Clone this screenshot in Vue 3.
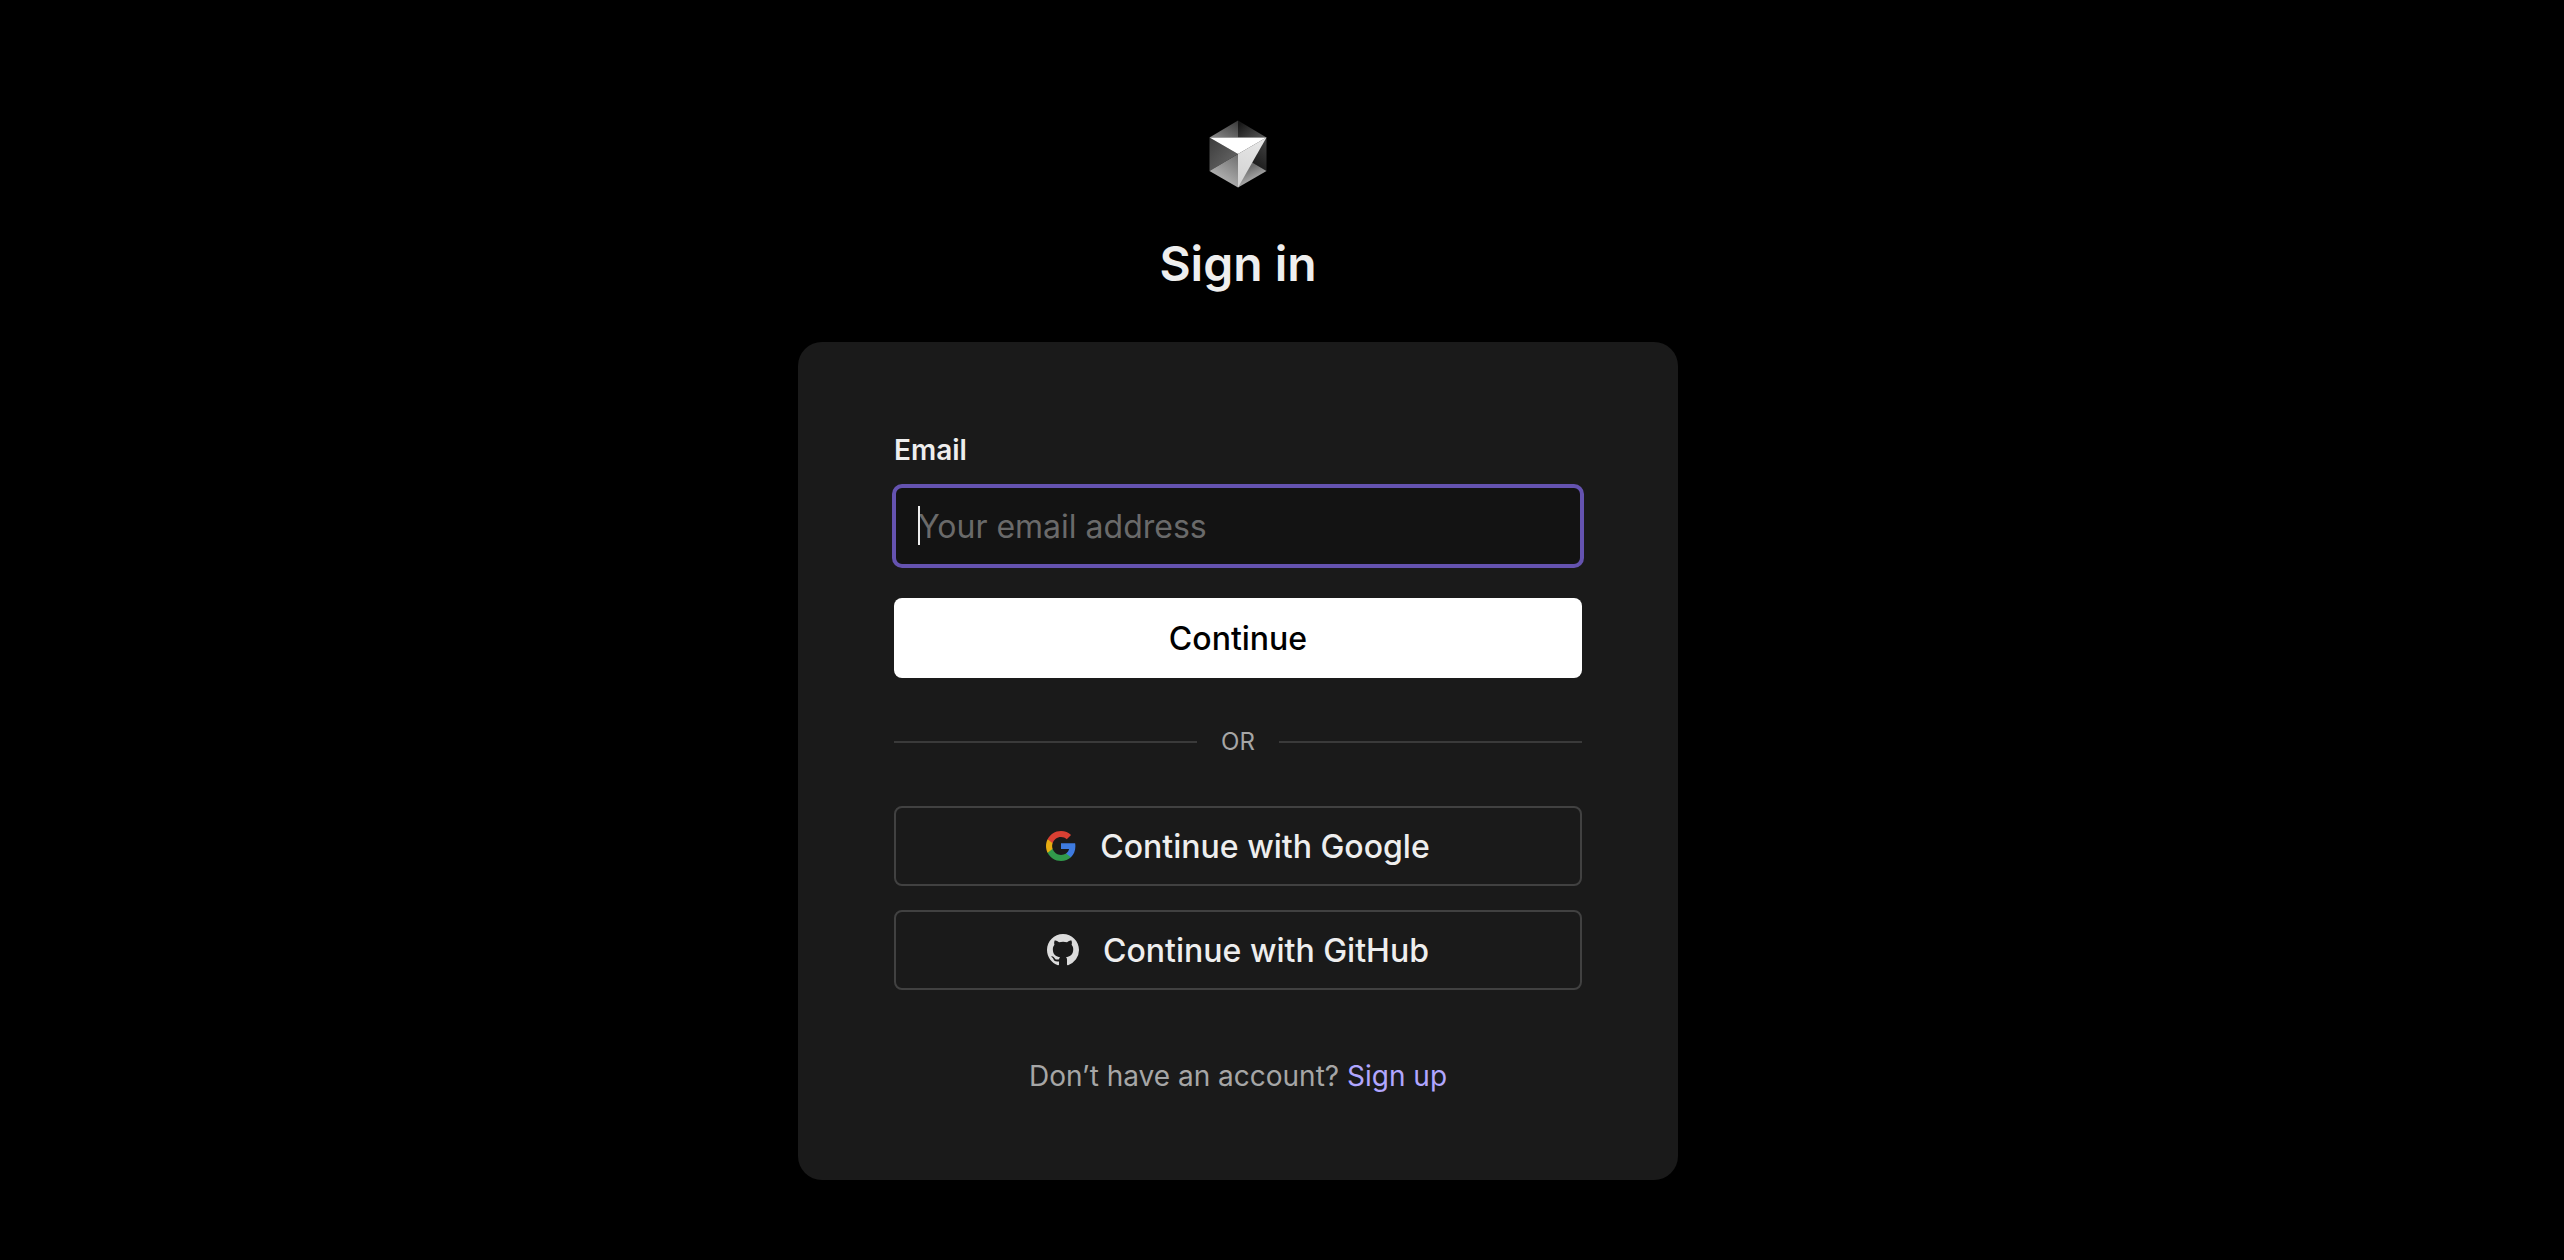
<script setup>
import { ref } from 'vue'

const email = ref('')
</script>

<template>
  <main class="page">
    <svg class="logo" viewBox="0 0 58 68" aria-hidden="true">
      <defs>
        <linearGradient id="top-left" x1="0" y1="1" x2="1" y2="0">
          <stop offset="0" stop-color="#8c8c8c" />
          <stop offset="1" stop-color="#383838" />
        </linearGradient>
        <linearGradient id="top-right" x1="0" y1="0.3" x2="1" y2="1">
          <stop offset="0" stop-color="#181818" />
          <stop offset="1" stop-color="#5c5c5c" />
        </linearGradient>
        <linearGradient id="left" x1="0" y1="0" x2="1" y2="1">
          <stop offset="0" stop-color="#3c3c3c" />
          <stop offset="1" stop-color="#6c6c6c" />
        </linearGradient>
        <linearGradient id="bottom-left" x1="1" y1="0" x2="0.4" y2="1">
          <stop offset="0" stop-color="#6e6e6e" />
          <stop offset="1" stop-color="#bcbcbc" />
        </linearGradient>
        <linearGradient id="right" x1="1" y1="0" x2="0.4" y2="0.9">
          <stop offset="0" stop-color="#444" />
          <stop offset="1" stop-color="#161616" />
        </linearGradient>
        <linearGradient id="bottom-right" x1="0.4" y1="0.4" x2="0.6" y2="0.9">
          <stop offset="0" stop-color="#6c6c6c" />
          <stop offset="1" stop-color="#bcbcbc" />
        </linearGradient>
        <linearGradient id="front" x1="0.5" y1="0" x2="0.3" y2="1">
          <stop offset="0" stop-color="#e6e6e6" />
          <stop offset="1" stop-color="#d2d2d2" />
        </linearGradient>
      </defs>
      <path d="M29 0.5 0.5 17.5H29z" fill="url(#top-left)" />
      <path d="M29 0.5 57.5 17.5H29z" fill="url(#top-right)" />
      <path d="M0.5 17.5 29 34 0.5 51z" fill="url(#left)" />
      <path d="M0.5 51 29 34V67.5z" fill="url(#bottom-left)" />
      <path d="M57.5 17.5V51L29 34z" fill="url(#right)" />
      <path d="M57.5 51 29 67.5V34z" fill="url(#bottom-right)" />
      <path d="M57.5 17.5 29 67.5V34z" fill="url(#front)" />
      <path d="M0.5 17.5H57.5L29 34z" fill="#fff" />
    </svg>

    <h1 class="title">Sign in</h1>

    <section class="card">
      <form class="email-form" @submit.prevent>
        <label class="label" for="email">Email</label>
        <div class="field">
          <input
            id="email"
            v-model="email"
            class="input"
            type="email"
            autocomplete="email"
            placeholder="Your email address"
          />
          <span v-if="!email" class="caret" aria-hidden="true"></span>
        </div>
        <button class="button primary" type="submit">Continue</button>
      </form>

      <div class="divider">OR</div>

      <div class="providers">
        <button class="button outline" type="button">
          <svg class="google" viewBox="1 1 22 22" aria-hidden="true">
            <path fill="#3e7be0" d="M22.56 12.25c0-.78-.07-1.53-.2-2.25H12v4.26h5.92c-.26 1.37-1.04 2.53-2.21 3.31v2.77h3.57c2.08-1.92 3.28-4.74 3.28-8.09z" />
            <path fill="#319a4c" d="M12 23c2.97 0 5.46-.98 7.28-2.66l-3.57-2.77c-.98.66-2.23 1.06-3.71 1.06-2.86 0-5.29-1.93-6.16-4.53H2.18v2.84C3.99 20.53 7.7 23 12 23z" />
            <path fill="#e6ac12" d="M5.84 14.09c-.22-.66-.35-1.36-.35-2.09s.13-1.43.35-2.09V7.07H2.18C1.43 8.55 1 10.22 1 12s.43 3.45 1.18 4.93l2.85-2.22.81-.62z" />
            <path fill="#d84033" d="M12 5.38c1.62 0 3.06.56 4.21 1.64l3.15-3.15C17.45 2.09 14.97 1 12 1 7.7 1 3.99 3.47 2.18 7.07l3.66 2.84c.87-2.6 3.3-4.53 6.16-4.53z" />
          </svg>
          Continue with Google
        </button>
        <button class="button outline" type="button">
          <svg class="github" viewBox="0 0 16 16" aria-hidden="true">
            <path fill="#dcdcdc" d="M8 0C3.58 0 0 3.58 0 8c0 3.54 2.29 6.53 5.47 7.59.4.07.55-.17.55-.38 0-.19-.01-.82-.01-1.49-2.01.37-2.53-.49-2.69-.94-.09-.23-.48-.94-.82-1.13-.28-.15-.68-.52-.01-.53.63-.01 1.08.58 1.23.82.72 1.21 1.87.87 2.33.66.07-.52.28-.87.51-1.07-1.78-.2-3.64-.89-3.64-3.95 0-.87.31-1.59.82-2.15-.08-.2-.36-1.02.08-2.12 0 0 .67-.21 2.2.82.64-.18 1.32-.27 2-.27s1.36.09 2 .27c1.53-1.04 2.2-.82 2.2-.82.44 1.1.16 1.92.08 2.12.51.56.82 1.27.82 2.15 0 3.07-1.87 3.75-3.65 3.95.29.25.54.73.54 1.48 0 1.07-.01 1.93-.01 2.2 0 .21.15.46.55.38A8.01 8.01 0 0 0 16 8c0-4.42-3.58-8-8-8z" />
          </svg>
          Continue with GitHub
        </button>
      </div>

      <p class="footer">Don’t have an account? <a class="link" href="#sign-up">Sign up</a></p>
    </section>
  </main>
</template>

<style>
body {
  margin: 0;
  background: #000;
}
</style>

<style scoped>
.page {
  box-sizing: border-box;
  display: flex;
  flex-direction: column;
  align-items: center;
  min-height: 100vh;
  padding: 120px 88px 80px 0;
  background: #000;
  color: #eee;
  font-family: Inter, "Liberation Sans", sans-serif;
}

.logo {
  width: 58px;
  height: 68px;
}

.title {
  margin: 46px 0 48px;
  font-size: 48px;
  font-weight: 600;
  line-height: 60px;
}

.card {
  box-sizing: border-box;
  width: 100%;
  max-width: 880px;
  padding: 88px 96px 84px;
  border-radius: 24px;
  background: #1a1a1a;
}

.email-form {
  display: flex;
  flex-direction: column;
}

.label {
  margin-bottom: 16px;
  font-size: 28px;
  font-weight: 600;
  line-height: 40px;
}

.field {
  position: relative;
  display: flex;
  margin-bottom: 32px;
}

.input {
  box-sizing: border-box;
  width: 100%;
  height: 80px;
  padding: 0 22px;
  border: 2px solid #6553b0;
  border-radius: 8px;
  outline: none;
  box-shadow: 0 0 0 2px #6553b0;
  background: #131313;
  color: #eee;
  font: inherit;
  font-size: 32px;
}

.input::placeholder {
  color: #6a6a6a;
  opacity: 1;
}

.caret {
  position: absolute;
  top: 20px;
  left: 24px;
  width: 2px;
  height: 39px;
  background: #eee;
}

.button {
  box-sizing: border-box;
  display: flex;
  align-items: center;
  justify-content: center;
  gap: 24px;
  width: 100%;
  height: 80px;
  border: 0;
  border-radius: 8px;
  font: inherit;
  font-size: 32px;
  font-weight: 500;
  cursor: pointer;
}

.primary {
  background: #fff;
  color: #000;
}

.outline {
  border: 2px solid #414141;
  background: transparent;
  color: #eee;
}

.divider {
  display: flex;
  align-items: center;
  gap: 24px;
  margin: 48px 0;
  color: #a6a6a6;
  font-size: 24px;
  line-height: 32px;
}

.divider::before,
.divider::after {
  flex: 1;
  height: 2px;
  background: #3a3a3a;
  content: "";
}

.providers {
  display: flex;
  flex-direction: column;
  gap: 24px;
}

.google {
  width: 30px;
  height: 30px;
}

.github {
  width: 32px;
  height: 32px;
}

.footer {
  margin: 66px 0 0;
  color: #a6a6a6;
  font-size: 28px;
  line-height: 40px;
  text-align: center;
}

.link {
  color: #b1a6ff;
  text-decoration: none;
}
</style>
